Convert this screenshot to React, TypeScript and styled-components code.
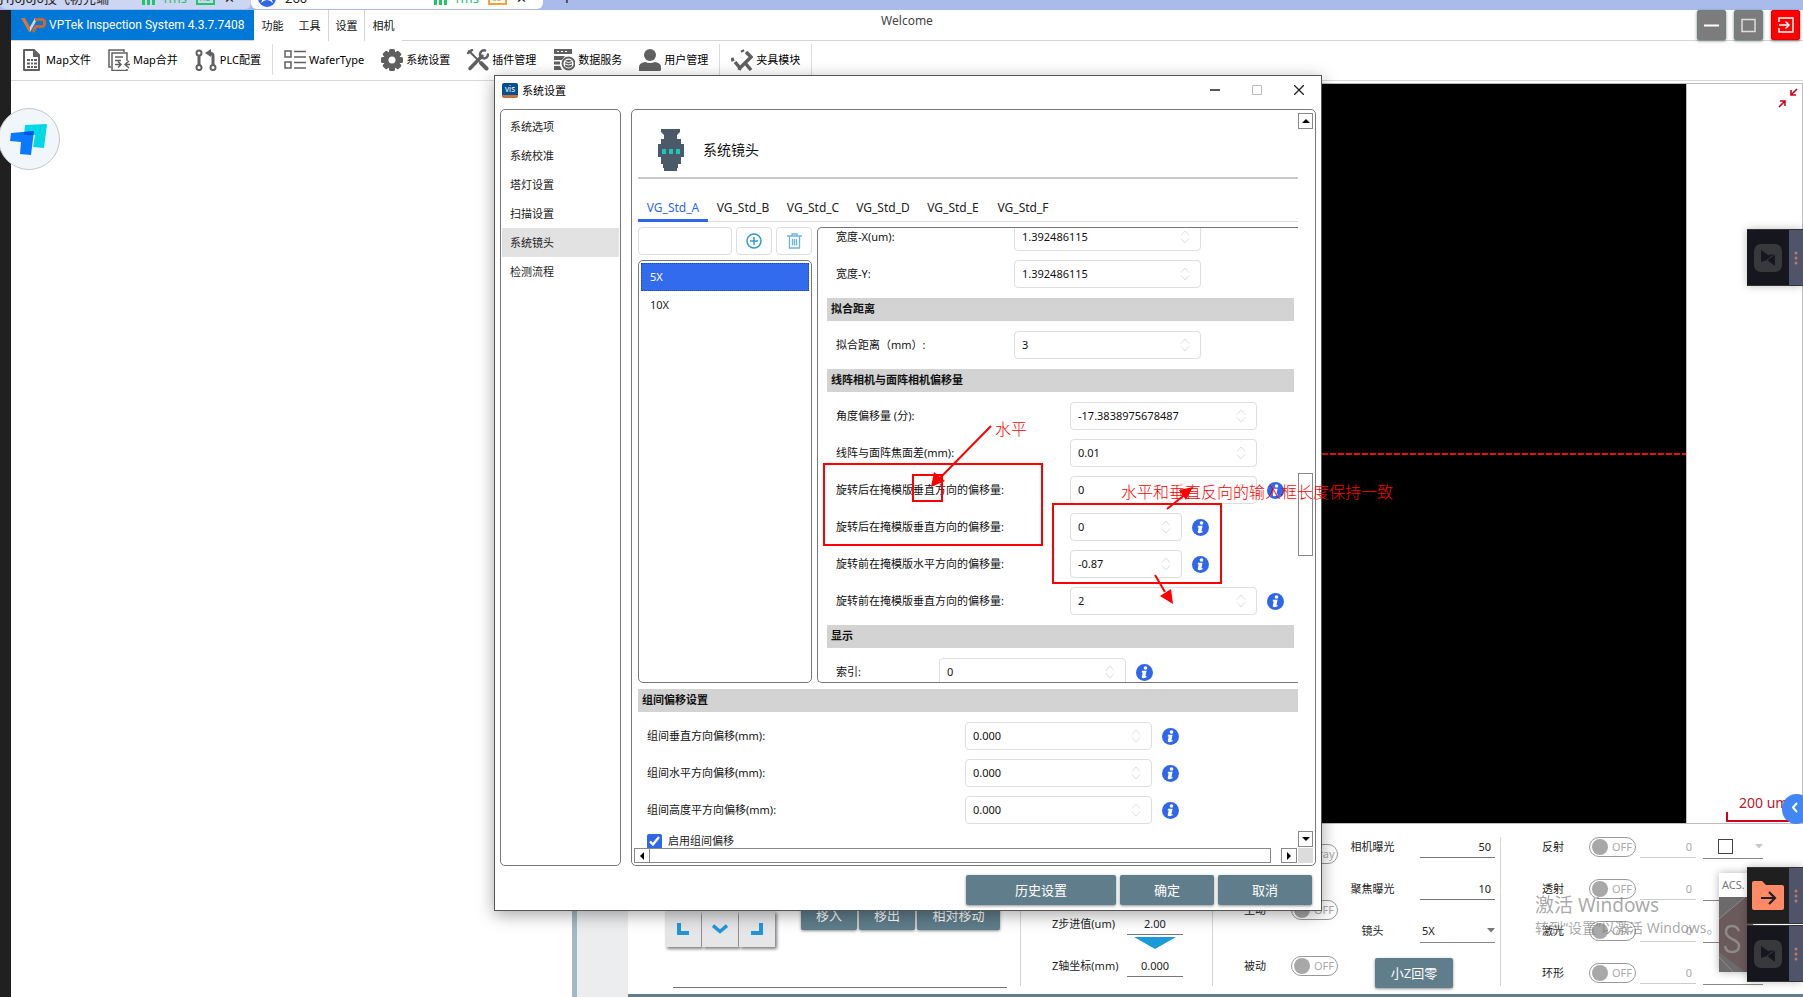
import React, { useId } from 'react';
import styled, { createGlobalStyle, css } from 'styled-components';

const slate = '#5f7d8b';
const blue = '#2f66ea';
const red = '#ff0000';

const GlobalStyle = createGlobalStyle`
  *, *::before, *::after { box-sizing: border-box; }
  body {
    margin: 0;
    background: #fff;
    color: #222;
    font: 11px/16px "Noto Sans", "Noto Sans CJK SC", sans-serif;
    overflow: hidden;
  }
  button, input, select { font: inherit; color: inherit; margin: 0; }
  button { padding: 0; cursor: pointer; }
`;

const Desktop = styled.div`
  position: relative;
  display: flex;
  flex-direction: column;
  min-height: 100vh;
  overflow: hidden;
`;

/* ---------- session tab strip ---------- */

const Strip = styled.nav`
  display: flex;
  height: 10px;
  background: #a9bbea;
  overflow: hidden;
`;

const SessionTab = styled.div<{ $active?: boolean; $width: number }>`
  width: ${p => p.$width}px;
  height: 9px;
  padding: 0 16px 0 ${p => (p.$active ? 7 : 0)}px;
  border-radius: 0 0 6px 6px;
  background: ${p => (p.$active ? '#fff' : '#ccd6f3')};
`;

const SessionRow = styled.div`
  display: flex;
  align-items: center;
  gap: 9px;
  height: 22px;
  margin-top: -13px;
  white-space: nowrap;
  font-size: 13px;
`;

const SessionName = styled.span`
  flex: 1;
`;

const Latency = styled.span`
  display: flex;
  align-items: center;
  gap: 6px;
  color: #1fc46b;
`;

const Quality = styled.span<{ $color: string }>`
  width: 19px;
  height: 14px;
  border: 2px solid ${p => p.$color};
  color: ${p => p.$color};
  font-size: 8px;
  line-height: 10px;
  text-align: center;
`;

const NewSession = styled.button`
  width: 48px;
  height: 22px;
  margin-top: -13px;
  border: 0;
  background: none;
  font-size: 18px;
`;

/* ---------- application frame ---------- */

const Screen = styled.div`
  flex: 1;
  display: flex;
`;

const Rail = styled.div`
  width: 11px;
  background: #202020;
`;

const Application = styled.div`
  flex: 1;
  display: flex;
  flex-direction: column;
  min-width: 0;
`;

const TitleBar = styled.header`
  display: grid;
  grid-template-columns: 1fr auto 1fr;
  height: 31px;
  border-bottom: 1px solid #d4d4d4;
`;

const TitleLeft = styled.div`
  display: flex;
  height: 31px;
`;

const Brand = styled.h1`
  display: flex;
  align-items: center;
  gap: 3px;
  width: 243px;
  height: 30px;
  margin: 0;
  padding-left: 10px;
  background: #0078d7;
  color: #fff;
  font-size: 12px;
  font-weight: 400;
  line-height: 16px;
  white-space: nowrap;
  font-family: Roboto, "Noto Sans", sans-serif;
`;

const MenuTab = styled.button<{ $active?: boolean }>`
  width: 37px;
  height: 31px;
  border: 0;
  background: #fff;
  color: #111;
  ${p =>
    p.$active &&
    css`
      border: 1px solid #d4d4d4;
      border-width: 0 1px;
    `}
`;

const Welcome = styled.span`
  padding-top: 3px;
  font-size: 12px;
  color: #444;
`;

const WindowButtons = styled.div`
  display: flex;
  justify-content: flex-end;
  gap: 8px;
  padding-right: 3px;
`;

const WindowButton = styled.button<{ $exit?: boolean }>`
  display: grid;
  place-items: center;
  width: 29px;
  height: 30px;
  border: 1px solid ${p => (p.$exit ? '#e00000' : '#6d8280')};
  border-radius: 2px;
  background: ${p => (p.$exit ? '#ff0000' : '#7c7c7c')};
  box-shadow: 0 1px 3px rgba(0, 0, 0, 0.5);
`;

const Toolbar = styled.div`
  display: flex;
  align-items: center;
  gap: 17px;
  height: 40px;
  padding: 0 0 2px 10px;
  border-bottom: 1px solid #d8d8d8;
`;

const ToolButton = styled.button`
  display: flex;
  align-items: center;
  gap: 3px;
  border: 0;
  background: none;
  color: #000;
  white-space: nowrap;
`;

const ToolDivider = styled.span`
  width: 1px;
  height: 31px;
  margin: 0 -6px;
  background: #dcdcdc;
`;

const Workspace = styled.main`
  flex: 1;
  display: flex;
  padding-top: 2px;
`;

const MapPane = styled.section`
  flex: 561 1 0;
  background: #fff;
`;

const Splitter = styled.div`
  width: 5px;
  background: #a3b8c0;
`;

const CameraPane = styled.section`
  flex: 1226 1 0;
  display: flex;
  flex-direction: column;
  min-width: 0;
`;

const Viewer = styled.div`
  flex: 1;
  display: flex;
  border: 1px solid #bdbdbd;
`;

const LiveImage = styled.div`
  flex: 1;
  display: flex;
  align-items: center;
  background: #000;
`;

const Crosshair = styled.div`
  flex: 1;
  height: 2px;
  background: repeating-linear-gradient(90deg, #d81414 0 6px, #300 6px 8px);
`;

const ViewerSide = styled.div`
  display: flex;
  flex-direction: column;
  justify-content: space-between;
  align-items: flex-end;
  width: 116px;
  border-left: 1px solid #bdbdbd;
`;

const CollapseButton = styled.button`
  width: 20px;
  height: 20px;
  margin: 4px 4px 0 0;
  border: 0;
  background: none;
`;

const ScaleBar = styled.div`
  display: flex;
  flex-direction: column;
  width: 76px;
  padding-left: 13px;
  margin-bottom: 1px;
  font-size: 14px;
  line-height: 18px;
  color: #b3202a;
  white-space: nowrap;
`;

const ScaleLine = styled.div`
  height: 10px;
  margin-left: -13px;
  border: 2px solid #d0021b;
  border-width: 0 0 2px 2px;
`;

/* ---------- bottom control panel ---------- */

const ControlRow = styled.div`
  display: flex;
  padding-left: 51px;
  background: #ecedef;
`;

const Controls = styled.div`
  flex: 1;
  display: flex;
  height: 173px;
  min-width: 0;
  background: #fff;
  border-bottom: 3px solid ${slate};
`;

const ControlSection = styled.section<{ $basis: number; $left: number }>`
  flex: ${p => p.$basis} 1 ${p => p.$basis}px;
  display: flex;
  flex-direction: column;
  padding: 2px 0 0 ${p => p.$left}px;
`;

const SectionDivider = styled.div`
  width: 1px;
  margin: 13px 0 8px;
  background: #d6d6d6;
`;

const JogRow = styled.div`
  display: flex;
  align-items: flex-end;
  gap: 1px;
  flex: 1;
  margin-bottom: 40px;
`;

const JogKey = styled.button`
  display: grid;
  place-items: center;
  width: 36px;
  height: 36px;
  border: 0;
  background: #e6e6e8;
  box-shadow: 2px 2px 3px rgba(0, 0, 0, 0.5);
`;

const MoveButtons = styled.div`
  display: flex;
  gap: 2px;
  margin: 0 0 17px 25px;
`;

const SolidButton = styled.button<{ $width: number }>`
  width: ${p => p.$width}px;
  height: 30px;
  border: 0;
  border-radius: 2px;
  background: ${slate};
  color: #fff;
  font-size: 13px;
  line-height: 20px;
  box-shadow: 0 1px 3px rgba(0, 0, 0, 0.45);
`;

const JogLine = styled.hr`
  width: 334px;
  height: 1px;
  margin: 0 0 6px 8px;
  border: 0;
  background: #777;
`;

const ZGrid = styled.div`
  display: grid;
  grid-template-columns: 75px 56px;
  grid-auto-rows: 20px 22px;
  align-content: end;
  align-items: center;
  flex: 1;
  padding-bottom: 17px;
`;

const LineInput = styled.input<{ $width?: number; $align?: string; $muted?: boolean }>`
  width: ${p => p.$width ?? 56}px;
  height: 22px;
  padding: 0 4px;
  border: 0;
  border-bottom: 1px solid ${p => (p.$muted ? '#ccc' : '#777')};
  background: none;
  color: ${p => (p.$muted ? '#aaa' : '#222')};
  text-align: ${p => p.$align ?? 'center'};
`;

const StepButton = styled.button`
  grid-column: 2;
  height: 20px;
  border: 0;
  background: none;
`;

const Split = styled.div`
  display: flex;
  gap: 12px;
`;

const ModeRow = styled.div`
  display: flex;
  align-items: center;
  width: 94px;
  height: 56px;
`;

const SmallLabel = styled.label<{ $width: number; $center?: boolean }>`
  width: ${p => p.$width}px;
  text-align: ${p => (p.$center ? 'center' : 'left')};
`;

const Toggle = styled.span`
  position: relative;
  display: flex;
  align-items: center;
  gap: 4px;
  width: 47px;
  height: 20px;
  padding-left: 2px;
  border: 1px solid #999;
  border-radius: 10px;
  color: #aaa;
  background: #fff;
`;

const ToggleBox = styled.input`
  position: absolute;
  inset: 0;
  width: 100%;
  height: 100%;
  opacity: 0;
`;

const Knob = styled.span`
  width: 16px;
  height: 16px;
  border-radius: 8px;
  background: #a8a8a8;
`;

const FieldRow = styled.div`
  display: flex;
  align-items: center;
  height: 42px;
`;

const FieldLabel = styled.label`
  width: 45px;
  margin-right: 25px;
  text-align: center;
`;

const LineSelect = styled.span<{ $width: number }>`
  position: relative;
  display: flex;
  align-items: center;
  justify-content: flex-end;
  width: ${p => p.$width}px;
  height: 24px;
  border-bottom: 1px solid #888;
  color: #777;

  select {
    position: absolute;
    inset: 0;
    width: 100%;
    padding: 0 2px;
    border: 0;
    background: none;
    appearance: none;
    color: #222;
  }
`;

const Swatch = styled.span`
  position: absolute;
  left: 15px;
  top: 4px;
  width: 15px;
  height: 15px;
  border: 1px solid #444;
`;

const LightRow = styled.div`
  display: flex;
  align-items: center;
  height: 42px;

  ${Toggle} { margin-right: 4px; }
  ${LineSelect} { margin-left: 7px; }
`;

const ZeroButton = styled(SolidButton)`
  margin-left: 25px;
`;

/* ---------- floating items ---------- */

const Bubble = styled.button`
  position: absolute;
  left: -2px;
  top: 108px;
  width: 62px;
  height: 62px;
  border: 1px solid #c3c8cc;
  border-radius: 50%;
  background: #f1f6fa;
`;

const Watermark = styled.div`
  position: absolute;
  right: 83px;
  bottom: 59px;
  width: 185px;
  color: rgba(120, 120, 120, 0.65);
  font-size: 14px;
  line-height: 20px;
  white-space: nowrap;
  pointer-events: none;
`;

const WatermarkTitle = styled.div`
  font-size: 19px;
  line-height: 26px;
`;

const Dock = styled.div<{ $top: number }>`
  position: absolute;
  right: 0;
  top: ${p => p.$top}px;
  display: grid;
  gap: 1px;
  box-shadow: 0 0 8px rgba(0, 0, 0, 0.25);
`;

const DockItem = styled.button<{ $dim?: boolean }>`
  display: grid;
  grid-template-columns: 42px 14px;
  place-items: center;
  height: 57px;
  border: 1px solid #333;
  border-width: 1px 0;
  background: linear-gradient(90deg, ${p => (p.$dim ? '#16171e' : '#1f1f1f')} 42px, #50546a 42px);
`;

const SideBubble = styled.button`
  position: absolute;
  right: -8px;
  top: 794px;
  width: 29px;
  height: 30px;
  padding-right: 4px;
  border: 0;
  border-radius: 15px;
  background: #4285f4;
`;

const StatusCard = styled.div`
  position: absolute;
  right: 50px;
  top: 873px;
  width: 34px;
  height: 99px;
  overflow: hidden;
  background: #6c6a6b;
  box-shadow: 0 0 8px rgba(0, 0, 0, 0.3);
`;

const StatusHead = styled.div`
  height: 24px;
  padding: 4px 3px;
  background: #fff;
  color: #777;
`;

/* ---------- settings dialog ---------- */

const Dialog = styled.section`
  position: absolute;
  left: 494px;
  top: 75px;
  display: flex;
  flex-direction: column;
  width: 828px;
  height: 836px;
  border: 1px solid #555;
  background: #fff;
  box-shadow: 0 4px 16px rgba(0, 0, 0, 0.35);
`;

const DialogTitle = styled.header`
  display: flex;
  align-items: center;
  gap: 4px;
  height: 33px;
  padding: 0 3px 4px 7px;
  color: #000;
`;

const DialogName = styled.h2`
  flex: 1;
  margin: 0;
  font-size: 11px;
  font-weight: 400;
`;

const VisLogo = styled.span`
  width: 16px;
  height: 15px;
  border-bottom: 3px solid #c8703c;
  border-radius: 2px;
  background: #07508f;
  color: #fff;
  font-size: 8px;
  line-height: 11px;
  text-align: center;
`;

const CaptionButton = styled.button`
  width: 38px;
  height: 22px;
  border: 0;
  background: none;
`;

const DialogBody = styled.div`
  flex: 1;
  display: flex;
  gap: 10px;
  min-height: 0;
  padding: 0 5px;
`;

const frame = css`
  border: 1px solid #777;
  border-radius: 5px;
`;

const SideNav = styled.nav`
  ${frame}
  width: 121px;
  padding: 2px 1px;
`;

const NavItem = styled.button<{ $active?: boolean }>`
  display: block;
  width: 100%;
  height: 29px;
  padding-left: 8px;
  border: 0;
  background: ${p => (p.$active ? '#e2e2e2' : 'none')};
  text-align: left;
`;

const Page = styled.div`
  ${frame}
  flex: 1;
  display: grid;
  grid-template-columns: minmax(0, 1fr) 15px;
  grid-template-rows: minmax(0, 1fr) 15px;
  padding: 2px;
`;

const PageContent = styled.div`
  display: flex;
  flex-direction: column;
  padding-left: 4px;
  overflow: hidden;
`;

const PageHead = styled.div`
  flex: none;
  display: flex;
  align-items: flex-end;
  gap: 19px;
  height: 67px;
  padding: 0 0 6px 20px;
  border-bottom: 2px solid #c9c9c9;
`;

const PageName = styled.h3`
  margin: 0;
  font-size: 14px;
  font-weight: 400;
  line-height: 42px;
  color: #111;
`;

const Tabs = styled.div`
  flex: none;
  display: flex;
  align-items: flex-end;
  height: 43px;
  border-bottom: 1px solid #dcdcdc;
`;

const Tab = styled.button<{ $active?: boolean }>`
  width: 70px;
  height: 27px;
  padding-top: 2px;
  margin-bottom: -1px;
  border: 0;
  border-bottom: 3px solid ${p => (p.$active ? blue : 'transparent')};
  background: none;
  color: ${p => (p.$active ? blue : '#222')};
  font-size: 12px;
  white-space: nowrap;
`;

const LensArea = styled.div`
  flex: none;
  display: flex;
  gap: 5px;
  height: 456px;
  margin: 5px 0;
`;

const LensColumn = styled.div`
  display: flex;
  flex-direction: column;
  gap: 5px;
  width: 174px;
`;

const LensTools = styled.div`
  display: flex;
  gap: 4px;
`;

const fieldBox = css`
  height: 28px;
  border: 1px solid #dedede;
  border-radius: 4px;
  background: #fff;
`;

const LensName = styled.input`
  ${fieldBox}
  flex: 1;
  min-width: 0;
`;

const IconButton = styled.button`
  ${fieldBox}
  display: grid;
  place-items: center;
  width: 36px;
`;

const LensList = styled.div`
  ${frame}
  flex: 1;
  padding: 2px;
`;

const LensItem = styled.button<{ $active?: boolean }>`
  display: block;
  width: 100%;
  height: 28px;
  padding: 0 8px;
  border: 1px ${p => (p.$active ? 'dotted #1d4bb5' : 'solid transparent')};
  background: ${p => (p.$active ? '#326bee' : 'none')};
  color: ${p => (p.$active ? '#fff' : '#222')};
  text-align: left;
`;

const Params = styled.div`
  flex: 1;
  overflow: hidden;
  border: 1px solid #777;
  border-right: 0;
  border-radius: 5px 0 0 5px;
`;

const ParamStack = styled.div`
  display: flex;
  flex-direction: column;
  gap: 9px;
  margin: -5px 4px 0 9px;
`;

const Heading = styled.h4`
  flex: none;
  height: 23px;
  margin: 1px 0;
  padding: 0 4px;
  background: #d3d3d3;
  color: #111;
  font-size: 11px;
  font-weight: 700;
  line-height: 22px;
`;

const ParamRow = styled.div<{ $labelWidth: number }>`
  display: grid;
  grid-template-columns: ${p => p.$labelWidth}px auto auto;
  justify-content: start;
  align-items: center;
  height: 28px;
  padding-left: 9px;
  color: #111;
  white-space: nowrap;
`;

const NumberBox = styled.span<{ $short?: boolean }>`
  ${fieldBox}
  display: flex;
  align-items: center;
  width: ${p => (p.$short ? 112 : 187)}px;
  padding: 0 10px 0 7px;

  input {
    flex: 1;
    min-width: 0;
    padding: 0;
    border: 0;
    background: none;
    outline: 0;
  }
`;

const InfoButton = styled.button`
  width: 17px;
  height: 17px;
  margin-left: 10px;
  border: 0;
  background: none;

  svg { display: block; }
`;

const GroupStack = styled.div`
  display: flex;
  flex-direction: column;
  gap: 9px;
`;

const EnableRow = styled.div`
  display: flex;
  align-items: center;
  gap: 6px;
  padding-left: 9px;
`;

const CheckBox = styled.input`
  width: 15px;
  height: 15px;
  accent-color: ${blue};
`;

const ScrollButton = styled.button`
  display: grid;
  place-items: center;
  width: 15px;
  height: 16px;
  border: 1px solid #888;
  background: #fff;
`;

const ScrollColumn = styled.div`
  display: flex;
  flex-direction: column;
  padding: 1px 0;
`;

const ScrollLine = styled.div`
  display: flex;
  justify-content: space-between;
  padding-right: 1px;

  ${ScrollButton} { width: 16px; height: 15px; }
`;

const Gap = styled.span<{ $grow: number }>`
  flex: ${p => p.$grow};
`;

const VerticalThumb = styled.div`
  height: 83px;
  border: 1px solid #888;
  background: #fff;
`;

const HorizontalThumb = styled.div`
  flex: 1;
  margin-right: 10px;
  border: 1px solid #888;
  border-left: 0;
`;

const ScrollCorner = styled.div`
  background: #dcdcdc;
`;

const DialogActions = styled.footer`
  display: flex;
  justify-content: flex-end;
  gap: 4px;
  height: 44px;
  padding: 9px 9px 0;
`;

const Marks = styled.svg`
  position: absolute;
  inset: 0;
  width: 100%;
  height: 100%;
  overflow: visible;
  pointer-events: none;
`;

const MarkText = styled.span<{ $x: number; $y: number }>`
  position: absolute;
  left: ${p => p.$x}px;
  top: ${p => p.$y}px;
  color: ${red};
  font-size: 16px;
  font-weight: 300;
  line-height: 20px;
  white-space: nowrap;
  pointer-events: none;
`;

/* ---------- drawings ---------- */

const grey = '#606060';

const Bars = () => (
  <svg width="13" height="14" viewBox="0 0 13 14" fill="#1fc46b">
    <path d="M0 6h3v8H0zM5 3h3v11H5zM10 0h3v14h-3z" />
  </svg>
);

const BrandMark = () => (
  <svg width="25" height="16" viewBox="0 0 25 16">
    <path d="M0 1h4l5 9 5-9 1 2-6 12H8z" fill="#d9733d" />
    <path d="M9 10l5-9h3l-8 14z" fill="#c9d4de" />
    <path d="M14 2.500h8l1.500 1.500v4L22 9.500h-7L12 15" fill="none" stroke="#c4683a" strokeWidth="3" />
  </svg>
);

const toolIcons: Record<string, React.ReactNode> = {
  file: (
    <>
      <path d="M3 1h10l5 5v15H3z" fill="none" stroke={grey} strokeWidth="2" strokeLinejoin="round" />
      <path d="M12 1v7h7z" fill={grey} />
      <path d="M6 10h3v2H6zm4 0h2v2h-2zm3 0h3v2h-3zM6 13.500h3v2H6zm4 0h2v2h-2zm3 0h3v2h-3zM6 17h3v2H6zm4 0h2v2h-2zm3 0h3v2h-3z" fill={grey} />
    </>
  ),
  merge: (
    <g fill="none" stroke={grey} strokeWidth="1.500">
      <path d="M3 18H1V1h15v2" />
      <path d="M19 12V4H4v17.500h15V20" />
      <path d="M7 8h8M7 11.500h6M7 15.500h6M10 12.500l3 3-3 3M21 12l-4 3.500 4 3.500M22 15.500h-4" />
    </g>
  ),
  plc: (
    <g fill="none" stroke={grey} strokeWidth="2">
      <circle cx="4" cy="4" r="2.500" />
      <circle cx="4" cy="18.500" r="2.500" />
      <circle cx="18" cy="18.500" r="2.500" />
      <path d="M4 6.500V16M18 16V7q0-3-4-3" strokeWidth="3" />
      <path d="M16 0v8l-6-4z" fill={grey} stroke="none" />
    </g>
  ),
  wafer: (
    <g fill="none" stroke={grey} strokeWidth="1.500">
      <path d="M1 2h6v6H1zM1 13h6v6H1zM10 2.500h12M10 8h12M10 13.500h12M10 19h12" />
    </g>
  ),
  gear: (
    <g fill={grey}>
      {[0, 45, 90, 135].map(a => (
        <rect key={a} x="8" y="0" width="6" height="22" rx="1.500" transform={`rotate(${a} 11 11)`} />
      ))}
      <circle cx="11" cy="11" r="8.500" />
      <circle cx="11" cy="11" r="3.500" fill="#fff" />
    </g>
  ),
  tools: (
    <g stroke={grey} fill="none" strokeLinecap="round">
      <path d="M2 2l10 10" strokeWidth="2" />
      <path d="M14 14l5.500 5.500" strokeWidth="4" />
      <path d="M3 19.500L15 7" strokeWidth="3.500" />
      <path d="M18 1.500a4 4 0 1 0 3 4M5 1l-4 3" strokeWidth="2.500" />
    </g>
  ),
  data: (
    <g fill={grey}>
      <path d="M1 0h18v5H1zM1 7h11l-3 4H1zM1 12.500h6v3H1zM1 17h6l2 4H1z" />
      <path d="M4 2h2v1H4zm4 0h2v1H8zm4 0h2v1h-2z" fill="#fff" />
      <circle cx="15.500" cy="14.500" r="6" fill="#fff" stroke={grey} strokeWidth="1.800" />
      <path d="M12 12q3.500-2.500 7 0v5q-3.500 3-7 0z" />
      <path d="M12 12.500q3.500 2 7 0M12 15q3.500 2 7 0" stroke="#fff" fill="none" />
    </g>
  ),
  user: (
    <g fill={grey}>
      <circle cx="11" cy="6" r="6" />
      <path d="M0 22v-4q0-4 6-5 5 2 10 0 6 1 6 5v3l-1 1z" />
    </g>
  ),
  clamp: (
    <g fill="none" stroke={grey} strokeWidth="3.500">
      <path d="M4 13l5 6 11-11-5-5M15 15l5 6M9 19l-1 2" />
      <path d="M0 11l3-1M11 1l1 2" />
    </g>
  ),
};

const ToolIcon = ({ name }: { name: string }) => (
  <svg width="22" height="22" viewBox="0 0 22 22">{toolIcons[name]}</svg>
);

const LensIcon = () => (
  <svg width="26" height="42" viewBox="0 0 26 42">
    <path
      d="M3 0h19v3l-3 3v4h4v5h3v13h-3v7h-3v4h-1v3H6v-3H5v-4H3v-7H0V15h3v-5h3V6L3 3z"
      fill="#4a5a68"
    />
    <path d="M4 20h4v5H4zm7 0h4v5h-4zm7 0h4v5h-4z" fill="#1fc7b5" />
  </svg>
);

const Spinner = () => (
  <svg width="10" height="14" viewBox="0 0 10 14" fill="none" stroke="#dedede">
    <path d="M1 5.500L5 1l4 4.500M1 8.500L5 13l4-4.500" />
  </svg>
);

const InfoIcon = () => (
  <svg width="17" height="17" viewBox="0 0 17 17">
    <circle cx="8.500" cy="8.500" r="8.500" fill={blue} />
    <circle cx="9.500" cy="4" r="1.800" fill="#fff" />
    <path d="M6 6.800h4.600L9.400 12.300q.7.200 1.400-.4l-.3 1.400q-4.300 2.200-4.800-.3l1-4.600H5.700z" fill="#fff" />
  </svg>
);

const Triangle = ({ dir }: { dir: 'up' | 'down' | 'left' | 'right' }) => {
  const d = {
    up: 'M0 6h8L4 2z',
    down: 'M0 2h8L4 6z',
    left: 'M6 0v8L2 4z',
    right: 'M2 0v8l4-4z',
  }[dir];
  return (
    <svg width="8" height="8" viewBox="0 0 8 8" fill="#000"><path d={d} /></svg>
  );
};

const Caret = ({ pale }: { pale?: boolean }) => (
  <svg width="8" height="5" viewBox="0 0 8 5" fill={pale ? '#c8c8c8' : '#777'}><path d="M0 0h8L4 4.500z" /></svg>
);

const Dots = () => (
  <svg width="4" height="14" viewBox="0 0 4 14" fill="#c07860">
    <circle cx="2" cy="2" r="1.500" />
    <circle cx="2" cy="7" r="1.500" />
    <circle cx="2" cy="12" r="1.500" />
  </svg>
);

const DimApp = () => (
  <svg width="28" height="28" viewBox="0 0 28 28">
    <rect width="28" height="28" rx="7" fill="#38393d" />
    <path d="M7 6l7 5 7-1v12l-8-6-6 2z" fill="#17181f" />
    <path d="M13 16l8-6" stroke="#38393d" />
  </svg>
);

/* ---------- composed parts ---------- */

const tools: (string[] | null)[] = [
  ['file', 'Map文件'],
  ['merge', 'Map合并'],
  ['plc', 'PLC配置'],
  null,
  ['wafer', 'WaferType'],
  ['gear', '系统设置'],
  ['tools', '插件管理'],
  ['data', '数据服务'],
  ['user', '用户管理'],
  null,
  ['clamp', '夹具模块'],
  null,
];

type ParamProps = { label: string; value: string; labelWidth: number; short?: boolean; info?: boolean };

const Param = ({ label, value, labelWidth, short, info }: ParamProps) => {
  const id = useId();
  return (
    <ParamRow $labelWidth={labelWidth}>
      <label htmlFor={id}>{label}</label>
      <NumberBox $short={short}>
        <input id={id} defaultValue={value} />
        <Spinner />
      </NumberBox>
      {info && (
        <InfoButton aria-label="说明"><InfoIcon /></InfoButton>
      )}
    </ParamRow>
  );
};

const Switch = ({ id, text = 'OFF' }: { id: string; text?: string }) => (
  <Toggle>
    <Knob />
    {text}
    <ToggleBox type="checkbox" id={id} aria-label={text} />
  </Toggle>
);

const Light = ({ label, swatch }: { label: string; swatch?: boolean }) => {
  const id = useId();
  return (
    <LightRow>
      <SmallLabel $width={47} htmlFor={id}>{label}</SmallLabel>
      <Switch id={id} />
      <LineInput $align="right" $muted defaultValue="0" aria-label={label} />
      <LineSelect $width={60}>
        {swatch && <Caret pale />}
        {swatch && <Swatch />}
        <select aria-label={label}><option> </option></select>
      </LineSelect>
    </LightRow>
  );
};

const SettingsDialog = () => (
  <Dialog role="dialog" aria-label="系统设置">
    <DialogTitle>
      <VisLogo>vis</VisLogo>
      <DialogName>系统设置</DialogName>
      <CaptionButton aria-label="最小化">
        <svg width="10" height="10" viewBox="0 0 10 10"><path d="M0 5h10" stroke="#222" strokeWidth="1.500" /></svg>
      </CaptionButton>
      <CaptionButton aria-label="最大化">
        <svg width="10" height="10" viewBox="0 0 10 10"><path d="M.5.500h9v9h-9z" fill="none" stroke="#bbb" /></svg>
      </CaptionButton>
      <CaptionButton aria-label="关闭">
        <svg width="10" height="10" viewBox="0 0 10 10"><path d="M0 0l10 10M10 0L0 10" stroke="#222" strokeWidth="1.300" /></svg>
      </CaptionButton>
    </DialogTitle>
    <DialogBody>
      <SideNav>
        {['系统选项', '系统校准', '塔灯设置', '扫描设置', '系统镜头', '检测流程'].map(name => (
          <NavItem key={name} $active={name === '系统镜头'}>{name}</NavItem>
        ))}
      </SideNav>
      <Page>
        <PageContent>
          <PageHead>
            <LensIcon />
            <PageName>系统镜头</PageName>
          </PageHead>
          <Tabs role="tablist">
            {['A', 'B', 'C', 'D', 'E', 'F'].map(letter => (
              <Tab key={letter} role="tab" $active={letter === 'A'}>VG_Std_{letter}</Tab>
            ))}
          </Tabs>
          <LensArea>
            <LensColumn>
              <LensTools>
                <LensName aria-label="名称" />
                <IconButton aria-label="添加">
                  <svg width="16" height="16" viewBox="0 0 16 16" fill="none" stroke="#2f9bd4" strokeWidth="1.500">
                    <circle cx="8" cy="8" r="7" />
                    <path d="M8 4v8M4 8h8" />
                  </svg>
                </IconButton>
                <IconButton aria-label="删除">
                  <svg width="15" height="16" viewBox="0 0 15 16" fill="none" stroke="#6db4e0" strokeWidth="1.300">
                    <path d="M0 3h15M5 3V1h5v2M2.500 3v12h10V3M5.500 6v6.500M7.500 6v6.500M9.500 6v6.500" />
                  </svg>
                </IconButton>
              </LensTools>
              <LensList>
                <LensItem $active>5X</LensItem>
                <LensItem>10X</LensItem>
              </LensList>
            </LensColumn>
            <Params>
              <ParamStack>
                <Param label="宽度-X(um):" value="1.392486115" labelWidth={178} />
                <Param label="宽度-Y:" value="1.392486115" labelWidth={178} />
                <Heading>拟合距离</Heading>
                <Param label="拟合距离（mm）:" value="3" labelWidth={178} />
                <Heading>线阵相机与面阵相机偏移量</Heading>
                <Param label="角度偏移量 (分):" value="-17.3838975678487" labelWidth={234} />
                <Param label="线阵与面阵焦面差(mm):" value="0.01" labelWidth={234} />
                <Param label="旋转后在掩模版垂直方向的偏移量:" value="0" labelWidth={234} info />
                <Param label="旋转后在掩模版垂直方向的偏移量:" value="0" labelWidth={234} short info />
                <Param label="旋转前在掩模版水平方向的偏移量:" value="-0.87" labelWidth={234} short info />
                <Param label="旋转前在掩模版垂直方向的偏移量:" value="2" labelWidth={234} info />
                <Heading>显示</Heading>
                <Param label="索引:" value="0" labelWidth={103} info />
              </ParamStack>
            </Params>
          </LensArea>
          <GroupStack>
            <Heading>组间偏移设置</Heading>
            <Param label="组间垂直方向偏移(mm):" value="0.000" labelWidth={318} info />
            <Param label="组间水平方向偏移(mm):" value="0.000" labelWidth={318} info />
            <Param label="组间高度平方向偏移(mm):" value="0.000" labelWidth={318} info />
            <EnableRow>
              <CheckBox type="checkbox" id="enable-group" defaultChecked />
              <label htmlFor="enable-group">启用组间偏移</label>
            </EnableRow>
          </GroupStack>
        </PageContent>
        <ScrollColumn>
          <ScrollButton aria-label="向上"><Triangle dir="up" /></ScrollButton>
          <Gap $grow={343} />
          <VerticalThumb />
          <Gap $grow={275} />
          <ScrollButton aria-label="向下"><Triangle dir="down" /></ScrollButton>
        </ScrollColumn>
        <ScrollLine>
          <ScrollButton aria-label="向左"><Triangle dir="left" /></ScrollButton>
          <HorizontalThumb />
          <ScrollButton aria-label="向右"><Triangle dir="right" /></ScrollButton>
        </ScrollLine>
        <ScrollCorner />
      </Page>
    </DialogBody>
    <DialogActions>
      <SolidButton $width={150}>历史设置</SolidButton>
      <SolidButton $width={94}>确定</SolidButton>
      <SolidButton $width={94}>取消</SolidButton>
    </DialogActions>
    <Marks fill="none" stroke={red} strokeWidth="2">
      <rect x="329" y="388" width="218" height="81" />
      <rect x="418" y="399" width="29" height="26" />
      <rect x="558" y="428" width="168" height="79" />
      <path d="M496 350L443 404M672 433l20-16M660 499l10 17" />
      <path d="M436 411l3-15 11 9zM684 414l14-3-7 13zM665 520l11-7 2 15z" fill={red} stroke="none" />
    </Marks>
    <MarkText $x={500} $y={343}>水平</MarkText>
    <MarkText $x={626} $y={406}>水平和垂直反向的输入框长度保持一致</MarkText>
  </Dialog>
);

const ControlPanel = () => (
  <Controls>
    <ControlSection $basis={392} $left={37}>
      <JogRow>
        <JogKey aria-label="左下">
          <svg width="12" height="12" viewBox="0 0 12 12" fill="none" stroke="#2196d8" strokeWidth="4"><path d="M2 0v10h10" /></svg>
        </JogKey>
        <JogKey aria-label="下">
          <svg width="16" height="10" viewBox="0 0 16 10" fill="none" stroke="#2196d8" strokeWidth="3.500"><path d="M1 1.500l7 6 7-6" /></svg>
        </JogKey>
        <JogKey aria-label="右下">
          <svg width="12" height="12" viewBox="0 0 12 12" fill="none" stroke="#2196d8" strokeWidth="4"><path d="M10 0v10H0" /></svg>
        </JogKey>
        <MoveButtons>
          <SolidButton $width={56}>移入</SolidButton>
          <SolidButton $width={56}>移出</SolidButton>
          <SolidButton $width={83}>相对移动</SolidButton>
        </MoveButtons>
      </JogRow>
      <JogLine />
    </ControlSection>
    <SectionDivider />
    <ControlSection $basis={191} $left={31}>
      <ZGrid>
        <StepButton aria-label="Z+">
          <svg width="42" height="13" viewBox="0 0 42 13"><path d="M0 13h42L21 0z" fill="#1b9ad8" /></svg>
        </StepButton>
        <label htmlFor="z-step">Z步进值(um)</label>
        <LineInput id="z-step" defaultValue="2.00" />
        <StepButton aria-label="Z-">
          <svg width="42" height="12" viewBox="0 0 42 12"><path d="M0 0h42L21 12z" fill="#1b9ad8" /></svg>
        </StepButton>
        <label htmlFor="z-axis">Z轴坐标(mm)</label>
        <LineInput id="z-axis" defaultValue="0.000" />
      </ZGrid>
    </ControlSection>
    <SectionDivider />
    <ControlSection $basis={287} $left={31}>
      <Split>
        <div>
          <ModeRow>
            <SmallLabel $width={47} htmlFor="mode-array">阵列</SmallLabel>
            <Switch id="mode-array" text="rray" />
          </ModeRow>
          <ModeRow>
            <SmallLabel $width={47} htmlFor="mode-active">主动</SmallLabel>
            <Switch id="mode-active" />
          </ModeRow>
          <ModeRow>
            <SmallLabel $width={47} htmlFor="mode-passive">被动</SmallLabel>
            <Switch id="mode-passive" />
          </ModeRow>
        </div>
        <div>
          <FieldRow>
            <FieldLabel htmlFor="camera-exposure">相机曝光</FieldLabel>
            <LineInput id="camera-exposure" $width={75} $align="right" defaultValue="50" />
          </FieldRow>
          <FieldRow>
            <FieldLabel htmlFor="focus-exposure">聚焦曝光</FieldLabel>
            <LineInput id="focus-exposure" $width={75} $align="right" defaultValue="10" />
          </FieldRow>
          <FieldRow>
            <FieldLabel htmlFor="lens">镜头</FieldLabel>
            <LineSelect $width={75}>
              <Caret />
              <select id="lens"><option>5X</option></select>
            </LineSelect>
          </FieldRow>
          <FieldRow>
            <ZeroButton $width={78}>小Z回零</ZeroButton>
          </FieldRow>
        </div>
      </Split>
    </ControlSection>
    <SectionDivider />
    <ControlSection $basis={302} $left={41}>
      <Light label="反射" swatch />
      <Light label="透射" />
      <Light label="激光" />
      <Light label="环形" />
    </ControlSection>
  </Controls>
);

export default function App() {
  return (
    <>
      <GlobalStyle />
      <Desktop>
        <Strip>
          <SessionTab $width={251}>
            <SessionRow>
              <SessionName>J1J0J0J0技飞初先端</SessionName>
              <Latency><Bars />1ms</Latency>
              <Quality $color="#1fc46b">HD</Quality>
              <span>✕</span>
            </SessionRow>
          </SessionTab>
          <SessionTab $active $width={292}>
            <SessionRow>
              <svg width="18" height="18" viewBox="0 0 18 18">
                <circle cx="9" cy="9" r="9" fill="#2f66ea" />
                <path d="M3 14q6-6 12 0l-3-8H6z" fill="#fff" />
              </svg>
              <SessionName>260</SessionName>
              <Latency><Bars />1ms</Latency>
              <Quality $color="#f5a13c">SD</Quality>
              <span>✕</span>
            </SessionRow>
          </SessionTab>
          <NewSession aria-label="新建">+</NewSession>
        </Strip>
        <Screen>
          <Rail />
          <Application>
            <TitleBar>
              <TitleLeft>
                <Brand><BrandMark />VPTek Inspection System 4.3.7.7408</Brand>
                <MenuTab>功能</MenuTab>
                <MenuTab>工具</MenuTab>
                <MenuTab $active>设置</MenuTab>
                <MenuTab>相机</MenuTab>
              </TitleLeft>
              <Welcome>Welcome</Welcome>
              <WindowButtons>
                <WindowButton aria-label="最小化">
                  <svg width="15" height="15" viewBox="0 0 15 15"><path d="M0 7.500h15" stroke="#fff" strokeWidth="2" /></svg>
                </WindowButton>
                <WindowButton aria-label="最大化">
                  <svg width="15" height="15" viewBox="0 0 15 15"><path d="M1 1.500h13v12H1z" fill="none" stroke="#ddd" strokeWidth="1.500" /></svg>
                </WindowButton>
                <WindowButton $exit aria-label="退出">
                  <svg width="16" height="16" viewBox="0 0 16 16" fill="none" stroke="#fff" strokeWidth="1.500">
                    <path d="M1 5V1h14v14H1v-4M1 8h10M7.500 4.500L11 8l-3.500 3.500" />
                  </svg>
                </WindowButton>
              </WindowButtons>
            </TitleBar>
            <Toolbar>
              {tools.map((tool, i) =>
                tool ? (
                  <ToolButton key={i}><ToolIcon name={tool[0]} />{tool[1]}</ToolButton>
                ) : (
                  <ToolDivider key={i} />
                ),
              )}
            </Toolbar>
            <Workspace>
              <MapPane />
              <Splitter />
              <CameraPane>
                <Viewer>
                  <LiveImage><Crosshair /></LiveImage>
                  <ViewerSide>
                    <CollapseButton aria-label="收起">
                      <svg width="20" height="20" viewBox="0 0 20 20" fill="none" stroke="#d0021b" strokeWidth="1.600">
                        <path d="M19 1l-6 6M13 2v5h5M1 19l6-6M2 13h5v5" />
                      </svg>
                    </CollapseButton>
                    <ScaleBar>
                      200 um
                      <ScaleLine />
                    </ScaleBar>
                  </ViewerSide>
                </Viewer>
                <ControlRow><ControlPanel /></ControlRow>
              </CameraPane>
            </Workspace>
          </Application>
        </Screen>

        <Watermark>
          <WatermarkTitle>激活 Windows</WatermarkTitle>
          转到“设置”以激活 Windows。
        </Watermark>
        <SettingsDialog />
        <Bubble aria-label="远程工具">
          <svg width="60" height="60" viewBox="0 0 60 60">
            <path d="M26 16l22-1-3 24-11-1 2-12H25z" fill="#00d8e6" />
            <path d="M12 24l23-2-3 24-11-1 1-12-11-1z" fill="#0a78ff" />
            <path d="M25 23l10-1-1 4h-9z" fill="#0550dc" />
          </svg>
        </Bubble>
        <StatusCard>
          <StatusHead>ACS.</StatusHead>
          <svg width="34" height="75" viewBox="0 0 34 75">
            <path d="M0 22L26 0h8v75h-8L0 55z" fill="#6b5a5b" />
            <path d="M0 22L26 0M0 60l14 15" stroke="#8f8a8a" />
            <path d="M20 34q-2-5-7-5-6 0-6 6 0 4 6 7 7 3 7 7 0 6-7 6-6 0-7-6" fill="none" stroke="#8f8a8a" strokeWidth="2.500" />
          </svg>
        </StatusCard>
        <Dock $top={229}>
          <DockItem $dim aria-label="应用"><DimApp /><Dots /></DockItem>
        </Dock>
        <Dock $top={867}>
          <DockItem aria-label="文件传输">
            <svg width="32" height="29" viewBox="0 0 32 29">
              <path d="M0 2q0-2 2-2h8l4 4h16q2 0 2 2v21q0 2-2 2H2q-2 0-2-2z" fill="#ff8a65" />
              <path d="M9 17h14M17 11l6 6-6 6" fill="none" stroke="#222" strokeWidth="2.200" />
            </svg>
            <Dots />
          </DockItem>
          <DockItem $dim aria-label="应用"><DimApp /><Dots /></DockItem>
        </Dock>
        <SideBubble aria-label="展开">
          <svg width="6" height="11" viewBox="0 0 6 11" fill="none" stroke="#fff" strokeWidth="2"><path d="M5 1L1 5.500 5 10" /></svg>
        </SideBubble>
      </Desktop>
    </>
  );
}
